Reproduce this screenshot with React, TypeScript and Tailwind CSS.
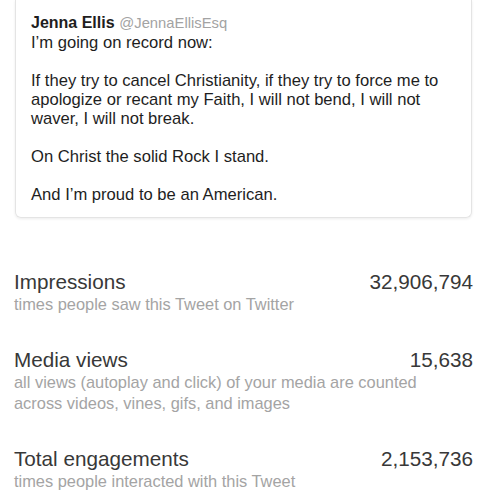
import React from "react";

const stats = [
  {
    label: "Impressions",
    value: "32,906,794",
    sub: ["times people saw this Tweet on Twitter"],
  },
  {
    label: "Media views",
    value: "15,638",
    sub: [
      "all views (autoplay and click) of your media are counted",
      "across videos, vines, gifs, and images",
    ],
  },
  {
    label: "Total engagements",
    value: "2,153,736",
    sub: ["times people interacted with this Tweet"],
  },
];

export default function App() {
  return (
    <div
      className="w-[487px] h-[500px] overflow-hidden bg-white"
      style={{ fontFamily: '"Liberation Sans", Arial, sans-serif' }}
    >
      {/* quoted tweet card */}
      <div className="mx-[15px] w-[457px] border-x border-b border-[#e4e4e4] rounded-b-md shadow-[0_1px_3px_rgba(0,0,0,0.08)] px-[15px] pt-[13px] pb-[13px] text-[16.6px] leading-[19px] text-[#1e1e1e]">
        <div className="leading-[20px]">
          <span className="font-bold text-[16px]">Jenna Ellis</span>{" "}
          <span className="text-[14.8px] text-[#a3a3a3]">@JennaEllisEsq</span>
        </div>
        <p>I’m going on record now:</p>
        <p className="mt-[19px]">
          If they try to cancel Christianity, if they try to force me to
          apologize or recant my Faith, I will not bend, I will not waver, I
          will not break.
        </p>
        <p className="mt-[19px]">On Christ the solid Rock I stand.</p>
        <p className="mt-[19px]">And I’m proud to be an American.</p>
      </div>

      {/* stats */}
      <div className="mt-[53px] px-[14px] flex flex-col gap-[34px]">
        {stats.map((s) => (
          <div key={s.label}>
            <div className="flex justify-between items-baseline text-[20.7px] leading-[22px] text-[#383838]">
              <span>{s.label}</span>
              <span>{s.value}</span>
            </div>
            <div className="mt-[1px] text-[16.4px] leading-[21px] text-[#a4a4a4]">
              {s.sub.map((l) => (
                <div key={l}>{l}</div>
              ))}
            </div>
          </div>
        ))}
      </div>
    </div>
  );
}
